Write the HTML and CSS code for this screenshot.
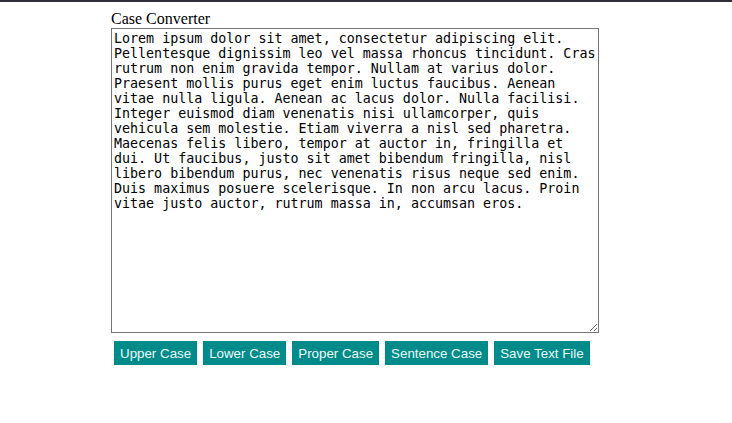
FILE: index.html
```html
<!DOCTYPE html>
<html lang="en">
<head>
<meta charset="utf-8">
<title>Case Converter</title>
<link rel="stylesheet" href="styles.css">
</head>
<body>
<div class="topbar"></div>
<main class="container">
  <label class="title" for="text">Case Converter</label>
  <textarea id="text" class="editor">Lorem ipsum dolor sit amet, consectetur adipiscing elit. Pellentesque dignissim leo vel massa rhoncus tincidunt. Cras rutrum non enim gravida tempor. Nullam at varius dolor. Praesent mollis purus eget enim luctus faucibus. Aenean vitae nulla ligula. Aenean ac lacus dolor. Nulla facilisi. Integer euismod diam venenatis nisi ullamcorper, quis vehicula sem molestie. Etiam viverra a nisl sed pharetra. Maecenas felis libero, tempor at auctor in, fringilla et dui. Ut faucibus, justo sit amet bibendum fringilla, nisl libero bibendum purus, nec venenatis risus neque sed enim. Duis maximus posuere scelerisque. In non arcu lacus. Proin vitae justo auctor, rutrum massa in, accumsan eros.</textarea>
  <div class="actions">
    <button class="btn" id="upper-case">Upper Case</button>
    <button class="btn" id="lower-case">Lower Case</button>
    <button class="btn" id="proper-case">Proper Case</button>
    <button class="btn" id="sentence-case">Sentence Case</button>
    <button class="btn" id="save-text-file">Save Text File</button>
  </div>
</main>
</body>
</html>
```

FILE: styles.css
```css
html, body {
  margin: 0;
  padding: 0;
  background: #ffffff;
}

.topbar {
  height: 2px;
  background: #2e2e36;
}

.container {
  width: 510px;
  margin: 0 auto;
  padding-top: 8px;
  display: flex;
  flex-direction: column;
  align-items: flex-start;
}

.title {
  display: block;
  font-family: "Liberation Serif", "Times New Roman", serif;
  font-size: 16px;
  line-height: 18px;
  color: #000;
}

.editor {
  box-sizing: border-box;
  width: 488px;
  height: 305px;
  margin: 0;
  padding: 2px;
  border: 1px solid #767676;
  font-family: "DejaVu Sans Mono", monospace;
  font-size: 13.333px;
  line-height: 15px;
  color: #000;
  background: #fff;
}

.actions {
  display: flex;
  gap: 6px;
  margin-top: 8px;
  margin-left: 3px;
}

.btn {
  margin: 0;
  border: none;
  padding: 5px 6px 3px;
  background: #008b8b;
  color: #eef8f8;
  font-family: "Liberation Sans", Arial, sans-serif;
  font-size: 13.333px;
  line-height: 16px;
  cursor: pointer;
}
```
